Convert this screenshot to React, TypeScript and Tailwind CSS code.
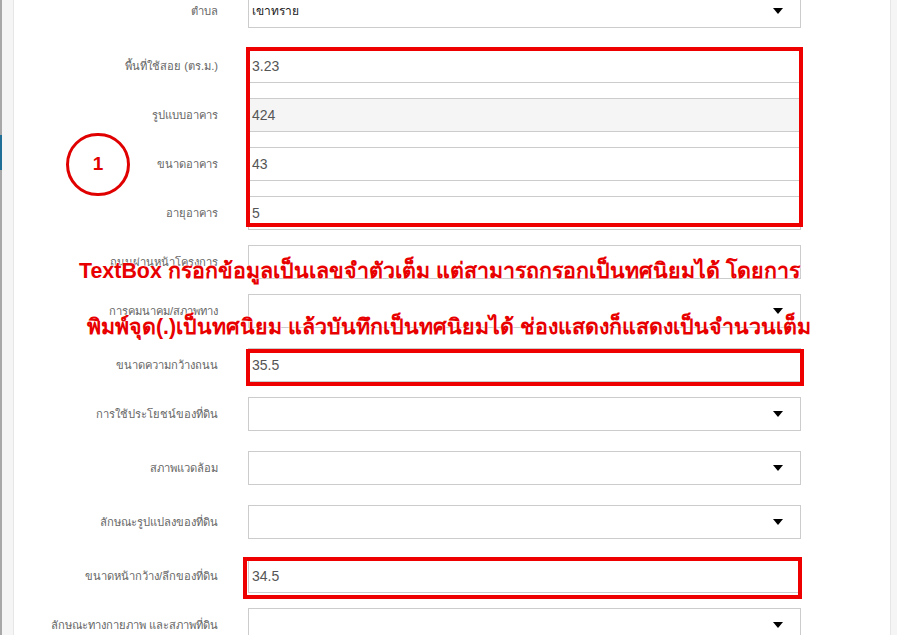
import React from "react"

type Row = {
  label: string
  value?: string
  select?: boolean
  readOnly?: boolean
  mt: string
}

// mt values are picked per row so the boxes land where the screenshot has them
const rows: Row[] = [
  { label: "ตำบล", value: "เขาทราย", select: true, mt: "-mt-[6px]" },
  { label: "พื้นที่ใช้สอย (ตร.ม.)", value: "3.23", mt: "mt-[21px]" },
  { label: "รูปแบบอาคาร", value: "424", readOnly: true, mt: "mt-[15px]" },
  { label: "ขนาดอาคาร", value: "43", mt: "mt-[15px]" },
  { label: "อายุอาคาร", value: "5", mt: "mt-[15px]" },
  { label: "ถนนผ่านหน้าโครงการ", mt: "mt-[15px]" },
  { label: "การคมนาคม/สภาพทาง", select: true, mt: "mt-[15px]" },
  { label: "ขนาดความกว้างถนน", value: "35.5", mt: "mt-[20px]" },
  { label: "การใช้ประโยชน์ของที่ดิน", select: true, mt: "mt-[15px]" },
  { label: "สภาพแวดล้อม", select: true, mt: "mt-[20px]" },
  { label: "ลักษณะรูปแปลงของที่ดิน", select: true, mt: "mt-[20px]" },
  { label: "ขนาดหน้ากว้าง/ลึกของที่ดิน", value: "34.5", mt: "mt-[20px]" },
  { label: "ลักษณะทางกายภาพ และสภาพที่ดิน", select: true, mt: "mt-[15px]" }
]

function Caret() {
  return (
    <svg width="10" height="6" viewBox="0 0 10 6" className="shrink-0">
      <path d="M0 0 H10 L5 6 Z" fill="#000" />
    </svg>
  )
}

function FormRow({ row }: { row: Row }) {
  return (
    <div className={`flex items-center h-[34px] ${row.mt}`}>
      <label className="w-[234px] shrink-0 pr-[30px] text-right text-[11.2px] text-[#666] whitespace-nowrap">
        {row.label}
      </label>
      <div
        className={`w-[553px] h-[34px] flex items-center border border-[#ccc] pl-[3px] pr-[17px] ${
          row.readOnly ? "bg-[#f5f5f5]" : "bg-white"
        }`}
      >
        <span
          className={`flex-1 ${
            row.select ? "text-[12px] text-[#222]" : "text-[14px] text-[#555]"
          }`}
        >
          {row.value}
        </span>
        {row.select && <Caret />}
      </div>
    </div>
  )
}

export default function App() {
  return (
    <div className="flex h-[635px] w-[897px] overflow-hidden bg-white font-['Liberation_Sans','Noto_Sans',sans-serif]">
      {/* left edge of the page behind */}
      <div className="w-[2px] flex flex-col bg-[#a8a8a8]">
        <div className="h-[135px]" />
        <div className="h-[35px] bg-[#1f6f99]" />
      </div>
      <div className="w-[12px] bg-[#f5f5f5] border-r border-[#e6e6e6]" />

      <main className="relative flex-1 overflow-hidden">
        <div className="flex flex-col">
          {rows.map(r => (
            <FormRow key={r.label} row={r} />
          ))}
        </div>

        {/* annotations on top */}
        <div className="absolute left-[232px] top-[47px] w-[557px] h-[180px] border-4 border-[#ee0000]" />
        <div className="absolute left-[232px] top-[349px] w-[558px] h-[37px] border-4 border-[#ee0000]" />
        <div className="absolute left-[229px] top-[557px] w-[559px] h-[42px] border-4 border-[#ee0000]" />

        <div className="absolute left-[52px] top-[133px] w-[64px] h-[63px] rounded-full border-[3px] border-[#e00000] flex items-center justify-center">
          <span className="text-[19px] font-bold text-[#e00000]">1</span>
        </div>

        <div className="absolute left-[65px] top-[255px] whitespace-nowrap text-[21.4px] font-bold text-[#e80000] [text-shadow:0_0_2px_#fff,0_0_2px_#fff]">
          TextBox กรอกข้อมูลเป็นเลขจำตัวเต็ม แต่สามารถกรอกเป็นทศนิยมได้ โดยการ
        </div>
        <div className="absolute left-[73px] top-[311px] whitespace-nowrap text-[21.4px] font-bold text-[#e80000] [text-shadow:0_0_2px_#fff,0_0_2px_#fff]">
          พิมพ์จุด(.)เป็นทศนิยม แล้วบันทึกเป็นทศนิยมได้ ช่องแสดงก็แสดงเป็นจำนวนเต็ม
        </div>
      </main>

      <div className="w-[7px] bg-[#f5f5f5] border-l border-[#e6e6e6]" />
    </div>
  )
}
